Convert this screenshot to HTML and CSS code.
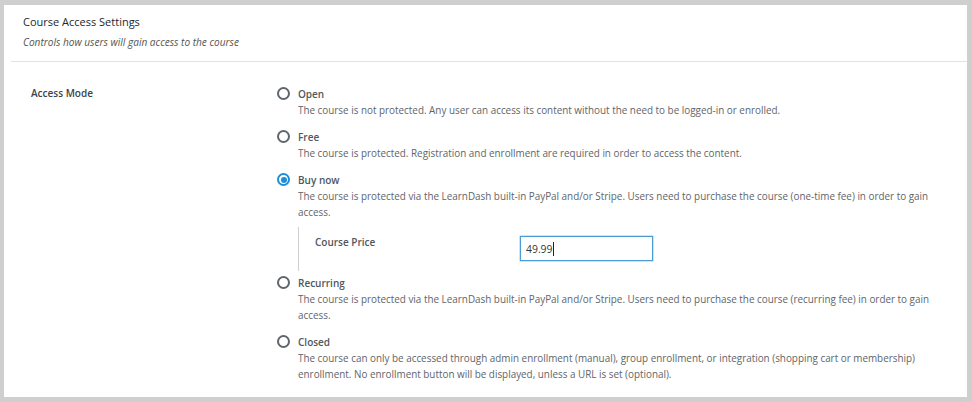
FILE: index.html
```html
<!DOCTYPE html>
<html lang="en">
<head>
<meta charset="utf-8">
<title>Course Access Settings</title>
<link rel="stylesheet" href="styles.css">
</head>
<body>
<div class="panel">
  <div class="panel-head">
    <div class="title">Course Access Settings</div>
    <div class="subtitle">Controls how users will gain access to the course</div>
  </div>
  <div class="panel-body">
    <div class="field-label">Access Mode</div>
    <div class="options">
      <div class="option">
        <div class="opt-head"><span class="radio"></span><span class="opt-name">Open</span></div>
        <div class="opt-desc">The course is not protected. Any user can access its content without the need to be logged-in or enrolled.</div>
      </div>
      <div class="option">
        <div class="opt-head"><span class="radio"></span><span class="opt-name">Free</span></div>
        <div class="opt-desc">The course is protected. Registration and enrollment are required in order to access the content.</div>
      </div>
      <div class="option">
        <div class="opt-head"><span class="radio checked"></span><span class="opt-name">Buy now</span></div>
        <div class="opt-desc">The course is protected via the LearnDash built-in PayPal and/or Stripe. Users need to purchase the course (one-time fee) in order to gain access.</div>
        <div class="sub-box">
          <div class="sub-label">Course Price</div>
          <div class="price-input"><span class="price-value">49.99</span><span class="caret"></span></div>
        </div>
      </div>
      <div class="option tight">
        <div class="opt-head"><span class="radio"></span><span class="opt-name">Recurring</span></div>
        <div class="opt-desc">The course is protected via the LearnDash built-in PayPal and/or Stripe. Users need to purchase the course (recurring fee) in order to gain access.</div>
      </div>
      <div class="option">
        <div class="opt-head"><span class="radio"></span><span class="opt-name">Closed</span></div>
        <div class="opt-desc">The course can only be accessed through admin enrollment (manual), group enrollment, or integration (shopping cart or membership) enrollment. No enrollment button will be displayed, unless a URL is set (optional).</div>
      </div>
    </div>
  </div>
</div>
</body>
</html>
```

FILE: styles.css
```css
html, body {
  margin: 0;
  padding: 0;
}
body {
  background: #cfcfcf;
  font-family: "Open Sans", "Noto Sans", sans-serif;
  width: 972px;
  height: 402px;
  box-sizing: border-box;
  padding: 5px 5px 5px 4px;
  overflow: hidden;
}
.panel {
  background: #fff;
  height: 392px;
  display: flex;
  flex-direction: column;
}
.panel-head {
  padding: 9px 0 11px 12px;
  margin-left: 7px;
  border-bottom: 1px solid #e2e2e2;
}
.title {
  font-size: 11px;
  line-height: 16px;
  color: #23282d;
}
.subtitle {
  margin-top: 4px;
  font-size: 10.1px;
  line-height: 16px;
  font-style: italic;
  color: #555;
}
.panel-body {
  display: flex;
  padding: 23px 0 0 27px;
}
.field-label {
  width: 246px;
  font-size: 10px;
  font-weight: 600;
  line-height: 17px;
  color: #3c434a;
}
.options {
  display: flex;
  flex-direction: column;
  gap: 10px;
  width: 678px;
}
.option.tight {
  margin-top: -7px;
}
.opt-head {
  display: flex;
  align-items: center;
  height: 17px;
  gap: 8px;
}
.radio {
  width: 13px;
  height: 13px;
  box-sizing: border-box;
  border: 2px solid #5f666d;
  border-radius: 50%;
  flex: none;
}
.radio.checked {
  border-color: #1e8fd6;
  position: relative;
}
.radio.checked::after {
  content: "";
  position: absolute;
  left: 1.5px;
  top: 1.5px;
  width: 6px;
  height: 6px;
  border-radius: 50%;
  background: #1e8fd6;
}
.opt-name {
  font-size: 10px;
  font-weight: 600;
  color: #50575e;
}
.opt-desc {
  padding-left: 21px;
  font-size: 9.9px;
  line-height: 16px;
  color: #60656a;
}
.sub-box {
  margin: 7px 0 0 21px;
  height: 44px;
  border-left: 1px solid #cfcfcf;
  display: flex;
  padding-left: 16px;
  padding-top: 7px;
  box-sizing: border-box;
}
.sub-label {
  width: 205px;
  font-size: 10px;
  font-weight: 600;
  line-height: 16px;
  color: #50575e;
}
.price-input {
  width: 133px;
  height: 25px;
  margin-top: 2px;
  box-sizing: border-box;
  border: 1px solid #4a9bd6;
  box-shadow: 0 0 0 0.5px #9cc8e8;
  display: flex;
  align-items: center;
  padding-left: 5px;
}
.price-value {
  font-size: 10.4px;
  color: #32373c;
}
.caret {
  width: 1px;
  height: 14px;
  background: #222;
  margin-left: 0.5px;
}
```
